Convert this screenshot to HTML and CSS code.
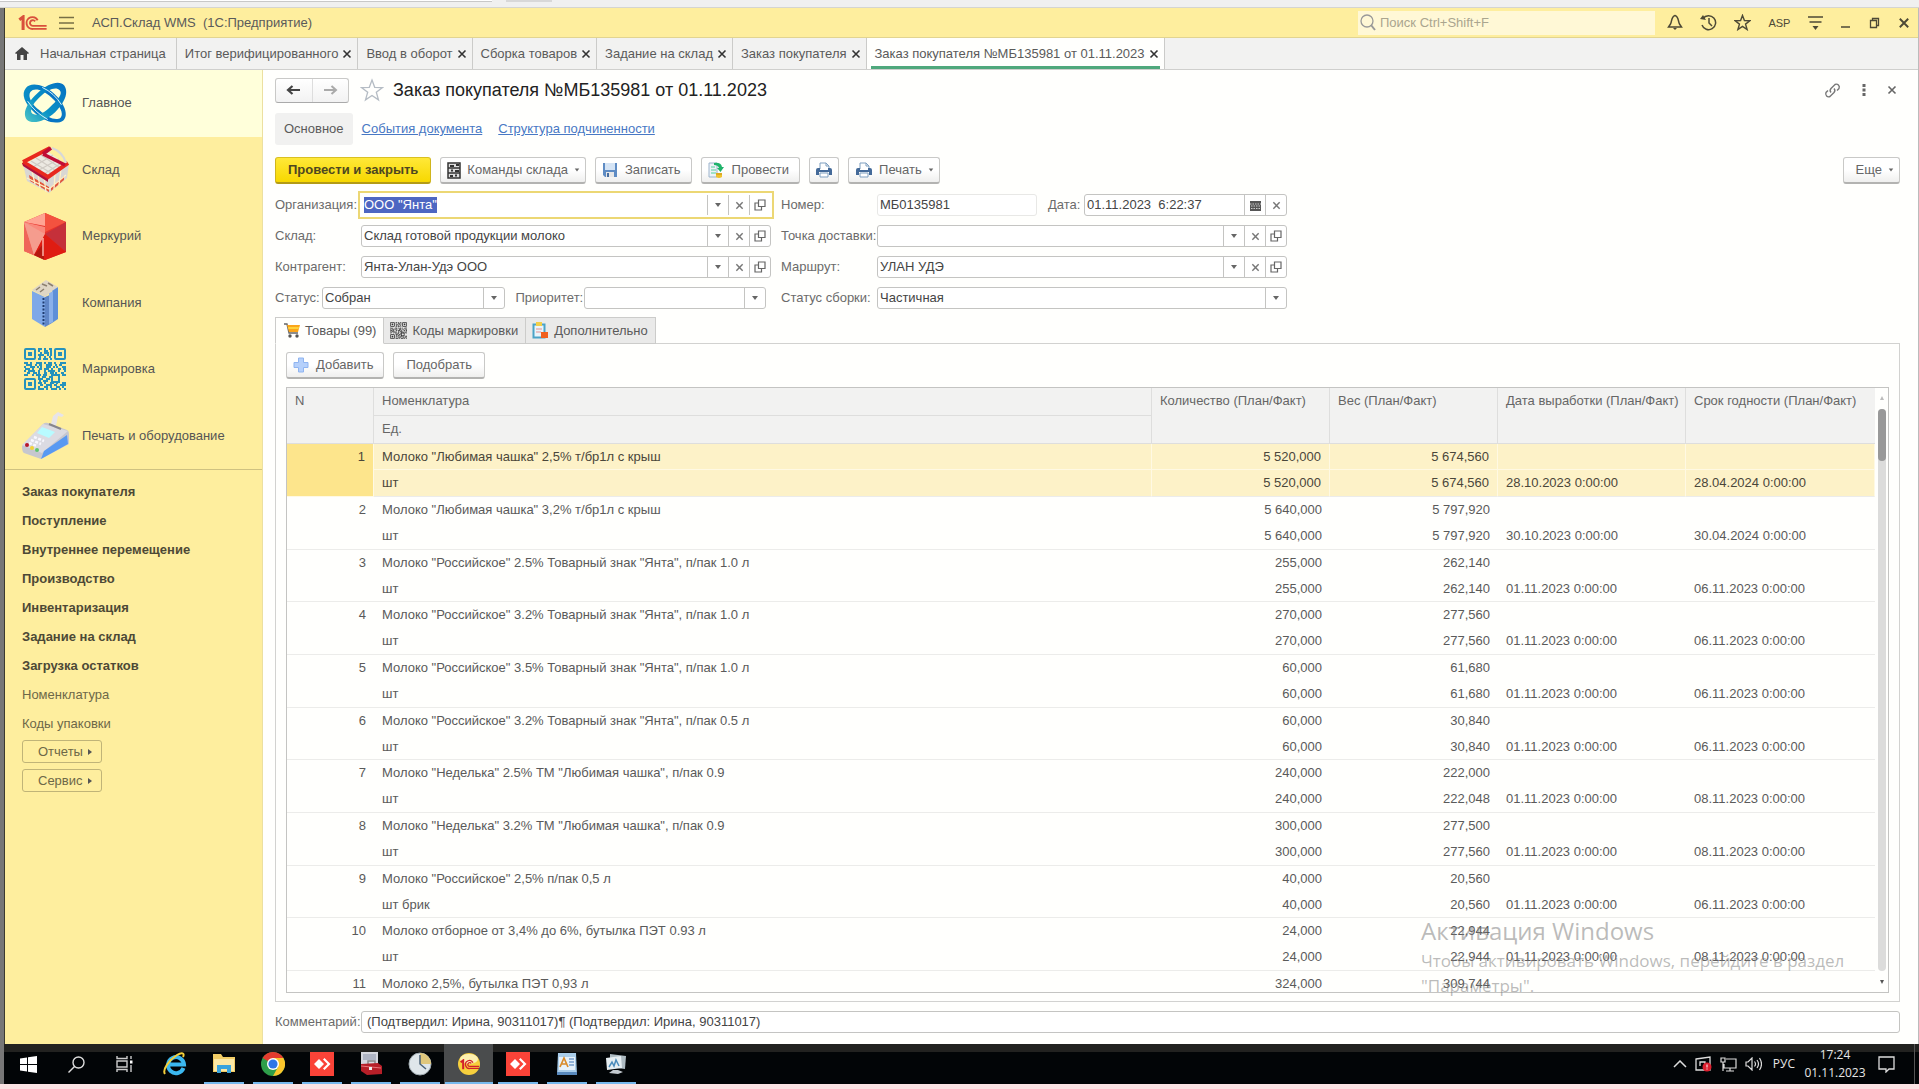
FILE: index.html
```
<!DOCTYPE html>
<html lang="ru">
<head>
  <meta charset="UTF-8">
  <title>АСП.Склад WMS (1С:Предприятие)</title>
  <link rel="stylesheet" href="styles.css">
</head>
<body>
  <!-- Общие иконки -->
  <svg class="sprite">
    <symbol id="i-x" viewBox="0 0 10 10"><path d="M1.500 1.500l7 7M8.500 1.500l-7 7" fill="none" stroke="currentColor" stroke-width="1.600"/></symbol>
    <symbol id="i-down" viewBox="0 0 8 8"><path d="M1 2h6L4 6z" fill="currentColor"/></symbol>
    <symbol id="i-open" viewBox="0 0 12 12"><path d="M4.500 1h6.500v6.500H4.500zM4.500 4H1v7h6.500V7.500" fill="none" stroke="currentColor" stroke-width="1.200"/></symbol>
    <symbol id="i-star" viewBox="0 0 24 24"><path d="M12 2l2.700 7.300 7.800.200-6.200 4.800 2.200 7.600L12 17.500l-6.500 4.400 2.200-7.600L1.500 9.500l7.800-.200z" fill="none" stroke="currentColor" stroke-width="var(--sw,1.300)"/></symbol>
    <symbol id="i-print" viewBox="0 0 18 18">
      <path d="M5 8V2h6l3 3v3" fill="#fff" stroke="#7f9fc0"/><path d="M11 2v3h3" fill="none" stroke="#7f9fc0"/>
      <path d="M1 9q0-2 2-2h2v2h8V7h2q2 0 2 2v5h-3v-3H4v3H1z" fill="#446a99"/><path d="M5 12h8v4H5z" fill="#fff" stroke="#7f9fc0"/>
    </symbol>
    <symbol id="i-any" viewBox="0 0 24 24"><path d="M0 0h24v24H0z" fill="#fa4338"/><path d="M9 7l5 5-5 5-5-5zM13 7.500l1.500-1.500 6 6-6 6-1.500-1.500 4.500-4.500z" fill="#fff"/></symbol>
    <symbol id="i-qr" viewBox="0 0 42 42">
      <g fill="none" stroke="currentColor" stroke-width="2">
        <rect x="1" y="1" width="10" height="10" rx="1"/><rect x="31" y="1" width="10" height="10" rx="1"/><rect x="1" y="31" width="10" height="10" rx="1"/>
        <path d="M14 1h14" stroke-dasharray="4 2 2 3"/><path d="M14 3h14" stroke-dasharray="2 4 4 2"/><path d="M16 5h12" stroke-dasharray="2 2 5 1"/>
        <path d="M14 7h14" stroke-dasharray="6 3 2 1"/><path d="M15 9h13" stroke-dasharray="2 3"/><path d="M14 11h14" stroke-dasharray="3 2 5 2"/>
        <path d="M0 15h42" stroke-dasharray="4 2 2 4 6 2 2 2"/><path d="M2 17h40" stroke-dasharray="6 3 2 2 3 4"/><path d="M0 19h42" stroke-dasharray="2 4 5 2 2 1"/>
        <path d="M1 21h41" stroke-dasharray="5 2 2 5 3 2"/><path d="M0 23h42" stroke-dasharray="2 2 7 3 2 4"/><path d="M3 25h39" stroke-dasharray="3 3 4 1 2 4"/>
        <path d="M0 27h42" stroke-dasharray="4 4 2 2 5 2"/><path d="M14 29h14" stroke-dasharray="2 2 4 3"/><path d="M14 31h12" stroke-dasharray="5 3"/>
        <path d="M15 33h14" stroke-dasharray="2 2 5 3"/><path d="M14 35h28" stroke-dasharray="4 2 2 4"/><path d="M16 37h26" stroke-dasharray="3 3 6 2"/>
        <path d="M14 39h28" stroke-dasharray="2 4 4 2"/><path d="M14 41h28" stroke-dasharray="6 2 2 3"/><rect x="28" y="27" width="7" height="7"/>
      </g>
      <path d="M4 4h4v4H4zM34 4h4v4h-4zM4 34h4v4H4z" fill="currentColor"/>
    </symbol>
    <symbol id="i-1c" viewBox="0 0 30 17">
      <g fill="none" stroke="currentColor"><path d="M1 5l4-3v14" stroke-width="3.200"/><path d="M20.500 5.500A6.300 6.300 0 1 0 15.500 14.800H30" stroke-width="2"/><path d="M17.800 6.800A3 3 0 1 0 15.500 11.500H30" stroke-width="2"/></g>
    </symbol>
  </svg>

  <div class="host-strip"><span class="host-field"></span><span class="host-tab"></span></div>

  <div class="desktop">
    <div class="app">
      <header class="titlebar">
        <svg class="logo"><use href="#i-1c"/></svg>
        <button class="icon-btn burger" aria-label="Меню"><svg width="15" height="14" viewBox="0 0 15 14"><path d="M0 1.500h15M0 7h15M0 12.500h15" stroke="#776f45" stroke-width="1.500"/></svg></button>
        <span class="app-name">АСП.Склад WMS&nbsp; (1С:Предприятие)</span>
        <div class="search">
          <svg width="16" height="17" viewBox="0 0 16 17"><circle cx="7" cy="7" r="6" fill="none" stroke="#999" stroke-width="1.300"/><path d="M11 11l4 5" stroke="#999" stroke-width="2"/></svg>
          <input type="text" placeholder="Поиск Ctrl+Shift+F" aria-label="Поиск">
        </div>
        <div class="win-tools">
          <button class="icon-btn" aria-label="Уведомления"><svg width="16" height="17" viewBox="0 0 16 17"><path d="M8 1.500C4 2.500 5 8 3.500 10L1.500 13h13l-2-3C11 8 12 2.500 8 1.500z" fill="none" stroke="#4d4936" stroke-width="1.500"/><path d="M6 14h4l-2 2z" fill="#4d4936"/></svg></button>
          <button class="icon-btn" aria-label="История"><svg width="17" height="17" viewBox="0 0 17 17"><path d="M3 4.500A7 7 0 1 1 2 11M9 4v5l3 3" fill="none" stroke="#4d4936" stroke-width="1.500"/><path d="M0 5l6 1-3-5z" fill="#4d4936"/></svg></button>
          <button class="icon-btn" aria-label="Избранное"><svg class="dark-star" width="17" height="17"><use href="#i-star"/></svg></button>
          <span class="user">ASP</span>
          <button class="icon-btn" aria-label="Сервис"><svg width="15" height="16" viewBox="0 0 15 16"><path d="M0 2h15M1.500 7h12" stroke="#4d4936" stroke-width="1.500"/><path d="M4.500 11h6l-3 4z" fill="#4d4936"/></svg></button>
          <button class="icon-btn" aria-label="Свернуть"><svg width="12" height="12" viewBox="0 0 12 12"><path d="M1 10h9" stroke="#4d4936" stroke-width="1.500"/></svg></button>
          <button class="icon-btn" aria-label="Развернуть"><svg width="12" height="12" viewBox="0 0 12 12"><path d="M1.500 3.500h6v7h-6zM3.500 3V1.500h6v7H8" fill="none" stroke="#4d4936" stroke-width="1.300"/></svg></button>
          <button class="icon-btn" aria-label="Закрыть"><svg width="12" height="12"><use href="#i-x"/></svg></button>
        </div>
      </header>

      <nav class="tabbar">
        <button class="tab home"><svg width="14" height="13" viewBox="0 0 14 13"><path d="M7 0l7 6-1 1-1-.600V13H8.500V8h-3v5H2V6.400L1 7 0 6z" fill="#444"/></svg>Начальная страница</button>
        <button class="tab">Итог верифицированного<svg class="x"><use href="#i-x"/></svg></button>
        <button class="tab">Ввод в оборот<svg class="x"><use href="#i-x"/></svg></button>
        <button class="tab">Сборка товаров<svg class="x"><use href="#i-x"/></svg></button>
        <button class="tab">Задание на склад<svg class="x"><use href="#i-x"/></svg></button>
        <button class="tab">Заказ покупателя<svg class="x"><use href="#i-x"/></svg></button>
        <button class="tab active">Заказ покупателя №МБ135981 от 01.11.2023<svg class="x"><use href="#i-x"/></svg></button>
      </nav>

      <div class="workspace">
        <aside class="sidebar">
          <nav class="sections">
            <a href="#" class="section active">
              <svg viewBox="0 0 48 48">
                <defs>
                  <linearGradient id="g1" x1="0" y1="0" x2="1" y2="0"><stop offset="0" stop-color="#0a8fc6"/><stop offset=".6" stop-color="#0672c4"/><stop offset="1" stop-color="#0879c4"/></linearGradient>
                  <linearGradient id="g2" x1="0" y1="1" x2="1" y2="0"><stop offset="0" stop-color="#4fc6c6"/><stop offset=".4" stop-color="#0a93c6"/><stop offset="1" stop-color="#0470c2"/></linearGradient>
                </defs>
                <g fill-rule="evenodd">
                  <path d="M3 8C8 1 22 3 34 14c12 11 16 24 10 29-7 5-20 2-31-8C1 24-2 14 3 8zm5 4c-3 5 1 13 10 20 9 8 18 12 23 8 4-4-1-14-10-22C21 9 12 7 8 12z" fill="url(#g1)"/>
                  <path d="M45 5C40-1 28 2 16 13 4 24-1 35 4 42c6 6 20 2 31-8C46 23 50 12 45 5zm-5 5c-4-4-13-1-21 7C10 25 6 34 11 36c5 3 14-2 21-10 8-7 11-13 8-16z" fill="url(#g2)"/>
                </g>
                <path d="M21 7q13 6 21 19M5 22q8 12 22 20" fill="none" stroke="#e9fbff"/>
              </svg>Главное</a>
            <a href="#" class="section">
              <svg viewBox="0 0 48 48">
                <path d="M2 18l4 17 22 12 18-15 2-15-19 15z" fill="#d9d7d3"/>
                <path d="M8 29l20 12v5L9 35zM30 41l13-11v4L30 45z" fill="#e2573b"/>
                <path d="M11 25l3 13M17 28l2 14M23 31l2 15M34 28l-1 15M40 23l-2 16M6 32l22 11 17-14" stroke="#fdf1c8" stroke-width="1.300" fill="none"/>
                <path d="M6 17L26 5l18 13-17 13z" fill="#ece9e2"/>
                <path d="M10 15l20 12M15 12l19 12M20 9l18 12M12 21L32 9M18 24L38 13M23 28l19-12" stroke="#cfcac3" stroke-width="1.200"/>
                <path d="M2 16L27 31 47 17M2 16L29 2" fill="none" stroke="#e8281e" stroke-width="4"/>
                <path d="M1 17l26 16v3L2 20z" fill="#b0103a"/><path d="M22 8l22 11M22 8l8-6" stroke="#c00c35" stroke-width="3.500"/>
                <path d="M31 2q11 4 14 15" stroke="#d8d8d8" stroke-width="2" fill="none"/>
              </svg>Склад</a>
            <a href="#" class="section">
              <svg viewBox="0 0 48 48">
                <path d="M3 10L24 1l21 9v30l-21 8-21-9z" fill="#e8322a"/><path d="M3 10L24 1v13z" fill="#ffa493"/><path d="M24 1l21 9-21 10z" fill="#f3523f"/>
                <path d="M3 10l21 5v7L13 43 3 39z" fill="#f9897c"/><path d="M3 10l10 33-10-4z" fill="#ef6659"/><path d="M3 10l10 33 11-21z" fill="#f59c8e"/>
                <path d="M45 10v30L24 22z" fill="#c5303a"/><path d="M24 22l21 18-21 8-11-5z" fill="#df1c12"/><path d="M13 43l10-12v17z" fill="#8c120c" opacity=".5"/><path d="M22 26v18" stroke="#ffb1a6" stroke-width="1.500"/>
              </svg>Меркурий</a>
            <a href="#" class="section">
              <svg viewBox="0 0 48 48">
                <path d="M11 12l13 6v30l-13-8z" fill="#7ea8e8"/><path d="M24 18l7-3v29l-7 4z" fill="#5f86c8"/><path d="M31 10l6-2v32l-6 4z" fill="#5e8fd8"/><path d="M28 14l4-2v31l-4 2z" fill="#8ab0ea"/>
                <path d="M11 11L25 1l12 7-6 4-7 6z" fill="#dfd6c5"/><path d="M15 11l4-3M19 13l4-3M21 5l5 2M27 4l5 3" stroke="#8b7f6e" stroke-width="1.500"/><path d="M22.500 19v28" stroke="#1e3b70" stroke-width="2" stroke-dasharray="2 1.500"/>
              </svg>Компания</a>
            <a href="#" class="section qr"><svg><use href="#i-qr"/></svg>Маркировка</a>
            <a href="#" class="section">
              <svg viewBox="0 0 48 48">
                <path d="M30 12l2-8 5-4 6 3-2 2-4-1-2 10z" fill="#e7e4e8"/><path d="M1 34L22 12q2-2 5-1l19 7q2 1 2 4v10L20 47 3 41q-2-1-2-7z" fill="#c6c7cf"/>
                <path d="M1 33L22 12l25 7-26 22z" fill="#dbdbe2"/><path d="M20 47l3-8 23-16 1 9z" fill="#5899f2"/><path d="M16 21l5-6 13 5-6 6z" fill="#b8fbff"/><path d="M28 12l12 5" stroke="#87858e" stroke-width="2"/>
                <path d="M13 25l10 4M10 28l10 4M8 31l8 3" stroke="#f8f8ff" stroke-width="2.500" stroke-dasharray="3 1.500"/>
                <circle cx="6" cy="33" r="2" fill="#b6172c"/><circle cx="11" cy="36" r="2" fill="#f2d338"/><circle cx="16" cy="38" r="2" fill="#5fc36e"/>
              </svg>Печать и оборудование</a>
          </nav>
          <nav class="commands">
            <a href="#" class="strong">Заказ покупателя</a>
            <a href="#" class="strong">Поступление</a>
            <a href="#" class="strong">Внутреннее перемещение</a>
            <a href="#" class="strong">Производство</a>
            <a href="#" class="strong">Инвентаризация</a>
            <a href="#" class="strong">Задание на склад</a>
            <a href="#" class="strong">Загрузка остатков</a>
            <a href="#">Номенклатура</a>
            <a href="#">Коды упаковки</a>
            <button>Отчеты<i class="tri"></i></button>
            <button>Сервис<i class="tri"></i></button>
          </nav>
        </aside>

        <main class="doc">
          <div class="doc-head">
            <div class="nav-pair">
              <button aria-label="Назад"><svg width="15" height="12" viewBox="0 0 15 12"><path d="M14 6H3M6.500 2L2 6l4.500 4" fill="none" stroke="#444" stroke-width="2.200"/></svg></button>
              <button aria-label="Вперед"><svg width="15" height="12" viewBox="0 0 15 12"><path d="M1 6h11M8.500 2L13 6l-4.500 4" fill="none" stroke="#aaa" stroke-width="2"/></svg></button>
            </div>
            <svg class="fav"><use href="#i-star"/></svg>
            <h1>Заказ покупателя №МБ135981 от 01.11.2023</h1>
            <div class="doc-tools">
              <button class="icon-btn" aria-label="Ссылка"><svg width="17" height="17" viewBox="0 0 17 17"><path d="M7 10.500a3 3 0 0 1 0-4l4-4a3 3 0 0 1 4 4l-2 2M10 6.500a3 3 0 0 1 0 4l-4 4a3 3 0 0 1-4-4l2-2" fill="none" stroke="#777" stroke-width="1.400"/></svg></button>
              <button class="icon-btn" aria-label="Еще"><svg width="4" height="14" viewBox="0 0 4 14"><path d="M.500 1h3v3h-3zM.500 5.500h3v3h-3zM.500 10h3v3h-3z" fill="#666"/></svg></button>
              <button class="icon-btn" aria-label="Закрыть"><svg width="10" height="10"><use href="#i-x"/></svg></button>
            </div>
          </div>

          <nav class="subnav">
            <span class="current">Основное</span>
            <a href="#">События документа</a>
            <a href="#">Структура подчиненности</a>
          </nav>

          <div class="toolbar">
            <button class="btn primary">Провести и закрыть</button>
            <button class="btn"><svg width="14" height="17" viewBox="0 0 14 17"><path d="M1 1h12v15H1z" fill="#ddd" stroke="#333" stroke-width="1.500"/><path d="M1 6h12M1 11h12" stroke="#333" stroke-width="1.500"/><path d="M3 4h4M9 3h3M4 8.500h2M8 9h4M3 14h3M8 13.500h2" stroke="#333" stroke-width="2"/></svg>Команды склада<svg class="arr"><use href="#i-down"/></svg></button>
            <button class="btn"><svg width="16" height="16" viewBox="0 0 16 16"><path d="M1 1h14v14H3l-2-2z" fill="#5f8cc4"/><path d="M3 1h10v7H3z" fill="#d5e4f5"/><path d="M4 10h8v5H4z" fill="#e8e8e8"/><path d="M5 11h2v4H5z" fill="#4a6f9f"/></svg>Записать</button>
            <button class="btn"><svg width="17" height="17" viewBox="0 0 17 17"><path d="M1 1h8v14H1z" fill="#eef3f8" stroke="#9db4cc"/><path d="M3 5h4M3 8h5M3 11h5" stroke="#8db" stroke-width="1.500"/><path d="M6 1q7-1 8 4h2l-3.500 5L9 6h2Q10 3 6 3z" fill="#1fb36b"/><path d="M8 11h6v4q-3 2-6 0z" fill="#f0c22e"/><path d="M8 12h6" stroke="#c8931a"/></svg>Провести</button>
            <button class="btn only-icon" aria-label="Печать документа"><svg width="18" height="18"><use href="#i-print"/></svg></button>
            <button class="btn"><svg width="18" height="18"><use href="#i-print"/></svg>Печать<svg class="arr"><use href="#i-down"/></svg></button>
            <button class="btn more">Еще<svg class="arr"><use href="#i-down"/></svg></button>
          </div>

          <form class="fields">
            <div class="line">
              <label class="w86" for="org">Организация:</label>
              <div class="box focused"><input id="org" value='ООО "Янта"'><button type="button" aria-label="Выбрать"><svg class="arr"><use href="#i-down"/></svg></button><button type="button" aria-label="Очистить"><svg class="x"><use href="#i-x"/></svg></button><button type="button" aria-label="Открыть"><svg class="open"><use href="#i-open"/></svg></button></div>
            </div>
            <div class="line">
              <label class="w96" for="num">Номер:</label>
              <div class="box plain"><input id="num" value="МБ0135981" readonly></div>
              <label class="date-label" for="date">Дата:</label>
              <div class="box"><input id="date" value="01.11.2023&nbsp; 6:22:37"><button type="button" aria-label="Календарь"><svg width="11" height="11" viewBox="0 0 11 11"><path d="M0 1h11v10H0z" fill="#555"/><path d="M0 4h11M1 6h9M1 8.500h9" stroke="#ccc" stroke-dasharray="1.500 1"/></svg></button><button type="button" aria-label="Очистить"><svg class="x"><use href="#i-x"/></svg></button></div>
            </div>
            <div class="line">
              <label class="w86" for="store">Склад:</label>
              <div class="box"><input id="store" value="Склад готовой продукции молоко"><button type="button" aria-label="Выбрать"><svg class="arr"><use href="#i-down"/></svg></button><button type="button" aria-label="Очистить"><svg class="x"><use href="#i-x"/></svg></button><button type="button" aria-label="Открыть"><svg class="open"><use href="#i-open"/></svg></button></div>
            </div>
            <div class="line">
              <label class="w96" for="point">Точка доставки:</label>
              <div class="box"><input id="point"><button type="button" aria-label="Выбрать"><svg class="arr"><use href="#i-down"/></svg></button><button type="button" aria-label="Очистить"><svg class="x"><use href="#i-x"/></svg></button><button type="button" aria-label="Открыть"><svg class="open"><use href="#i-open"/></svg></button></div>
            </div>
            <div class="line">
              <label class="w86" for="partner">Контрагент:</label>
              <div class="box"><input id="partner" value="Янта-Улан-Удэ ООО"><button type="button" aria-label="Выбрать"><svg class="arr"><use href="#i-down"/></svg></button><button type="button" aria-label="Очистить"><svg class="x"><use href="#i-x"/></svg></button><button type="button" aria-label="Открыть"><svg class="open"><use href="#i-open"/></svg></button></div>
            </div>
            <div class="line">
              <label class="w96" for="route">Маршрут:</label>
              <div class="box"><input id="route" value="УЛАН УДЭ"><button type="button" aria-label="Выбрать"><svg class="arr"><use href="#i-down"/></svg></button><button type="button" aria-label="Очистить"><svg class="x"><use href="#i-x"/></svg></button><button type="button" aria-label="Открыть"><svg class="open"><use href="#i-open"/></svg></button></div>
            </div>
            <div class="line statuses">
              <label for="status">Статус:</label>
              <div class="box"><select id="status"><option>Собран</option></select><span class="drop"><svg class="arr"><use href="#i-down"/></svg></span></div>
              <label class="prio" for="prio">Приоритет:</label>
              <div class="box"><select id="prio"><option></option></select><span class="drop"><svg class="arr"><use href="#i-down"/></svg></span></div>
            </div>
            <div class="line">
              <label class="w96" for="build">Статус сборки:</label>
              <div class="box"><select id="build"><option>Частичная</option></select><span class="drop"><svg class="arr"><use href="#i-down"/></svg></span></div>
            </div>
          </form>

          <div class="pages">
            <button class="page active"><svg width="16" height="16" viewBox="0 0 16 16"><path d="M0 1h3l2 9h9" fill="none" stroke="#666" stroke-width="1.300"/><path d="M3 2h13l-2 7H5z" fill="#fba51a"/><path d="M4 4h11l-.500 2H4.500z" fill="#ffd23a"/><circle cx="6" cy="13" r="1.700" fill="#555"/><circle cx="13" cy="13" r="1.700" fill="#555"/></svg>Товары (99)</button>
            <button class="page"><svg class="qr-small"><use href="#i-qr"/></svg>Коды маркировки</button>
            <button class="page"><svg width="17" height="17" viewBox="0 0 17 17"><path d="M1.500 2.500h11v13h-11z" fill="#e9f4fa" stroke="#4ba3c7" stroke-width="2"/><path d="M4 0h6v4H4z" fill="#f2cf4a"/><path d="M4 7h6M4 10h5" stroke="#e58f8f"/><path d="M9 10h7v6H9z" fill="#f0611f"/></svg>Дополнительно</button>
          </div>

          <section class="panel">
            <div class="toolbar small">
              <button class="btn add"><svg width="16" height="16" viewBox="0 0 16 16"><path d="M5.500 1h5v4.500H15v5h-4.500V15h-5v-4.500H1v-5h4.500z" fill="#b5d0fb" stroke="#8fb4f0" stroke-linejoin="round"/></svg>Добавить</button>
              <button class="btn pick">Подобрать</button>
            </div>
            <div class="grid">
              <div class="grid-view">
                <table id="goods">
                  <colgroup><col class="c-n"><col><col class="c-qty"><col class="c-weight"><col class="c-made"><col class="c-exp"></colgroup>
                  <thead>
                    <tr><th rowspan="2">N</th><th>Номенклатура</th><th rowspan="2">Количество (План/Факт)</th><th rowspan="2">Вес (План/Факт)</th><th rowspan="2">Дата выработки (План/Факт)</th><th rowspan="2">Срок годности (План/Факт)</th></tr>
                    <tr><th>Ед.</th></tr>
                  </thead>
                </table>
              </div>
              <div class="scroll"><i class="up"></i><div class="track"><div class="thumb"></div></div><i class="dn"></i></div>
            </div>
          </section>

          <div class="line comment">
            <label class="w86" for="comment">Комментарий:</label>
            <div class="box"><input id="comment" value="(Подтвердил: Ирина, 90311017)¶ (Подтвердил: Ирина, 90311017)"></div>
          </div>
        </main>
      </div>
    </div>

    <footer class="taskbar">
      <button class="task sys" aria-label="Пуск"><svg width="17" height="17" viewBox="0 0 17 17"><path d="M0 2.500l7-1V8H0zM8 1.300L17 0v8H8zM0 9h7v6.500l-7-1zM8 9h9v8l-9-1.300z" fill="#fff"/></svg></button>
      <button class="task sys" aria-label="Поиск"><svg width="17" height="17" viewBox="0 0 17 17"><circle cx="10.500" cy="6.500" r="5.500" fill="none" stroke="#ddd" stroke-width="1.400"/><path d="M6.500 10.500L.500 16.500" stroke="#ddd" stroke-width="1.400"/></svg></button>
      <button class="task sys" aria-label="Представление задач"><svg width="17" height="16" viewBox="0 0 17 16"><path d="M1 0v2.500h10V0M1 16v-2.500h10V16M1 5h10v6H1zM15 0v3M15 9v7" fill="none" stroke="#ccc" stroke-width="1.400"/><path d="M14 4.500h2.500v3H14z" fill="#fff"/></svg></button>
      <button class="task ie" aria-label="Internet Explorer"><svg width="24" height="24" viewBox="0 0 24 24"><path d="M20.500 16A8 8 0 1 1 21 12.500H7" fill="none" stroke="#3bb8f0" stroke-width="4"/><path d="M2 22C-1 18 6 8 14 3c5-3 8-2 6 2" fill="none" stroke="#f4cf3a" stroke-width="2"/></svg></button>
      <button class="task run" aria-label="Проводник"><svg width="22" height="22" viewBox="0 0 22 22"><path d="M0 3V1h8l2 3h12v15H0z" fill="#f2cd66"/><path d="M1 6h20v12H1z" fill="#fde9a5"/><path d="M4 12h14v8h-4v-4H8v4H4z" fill="#3aa4dd"/></svg></button>
      <button class="task run" aria-label="Chrome"><svg width="24" height="24" viewBox="0 0 24 24"><circle cx="12" cy="12" r="12" fill="#2e9e4a"/><path d="M12 12L1.600 6A12 12 0 0 1 22.400 6z" fill="#e33b2e"/><path d="M12 6h10.400A12 12 0 0 1 12 24l5-9z" fill="#fbc62c"/><circle cx="12" cy="12" r="6" fill="#fff"/><circle cx="12" cy="12" r="4.600" fill="#2f76e6"/></svg></button>
      <button class="task run" aria-label="AnyDesk"><svg width="24" height="24"><use href="#i-any"/></svg></button>
      <button class="task run" aria-label="Инструменты"><svg width="22" height="24" viewBox="0 0 22 24"><path d="M1 0h17v13H1z" fill="#d5d7df"/><path d="M3 2h13v6H3z" fill="#aeb4c4"/><path d="M8 12V9h7v3" fill="none" stroke="#888" stroke-width="1.500"/><path d="M1 12l17-1 4 3v8l-15 1-6-4z" fill="#b71f28"/><path d="M1 14l20 2" stroke="#e9747b"/><path d="M9 15h3v3H9z" fill="#eee"/></svg></button>
      <button class="task run" aria-label="Часы"><svg width="24" height="24" viewBox="0 0 24 24"><circle cx="12" cy="12" r="11" fill="#dfe6ea" stroke="#9faab0"/><path d="M12 12V1a11 11 0 0 1 11 11z" fill="#e0c77c"/><path d="M12 3v9l6 5" fill="none" stroke="#4b6176" stroke-width="1.500"/></svg></button>
      <button class="task run current" aria-label="1С:Предприятие"><svg width="24" height="24" viewBox="0 0 24 24"><circle cx="12" cy="12" r="11" fill="#f6cf3d"/><ellipse cx="12" cy="7" rx="9" ry="5" fill="#fdf0b0"/><svg x="3" y="7" width="19" height="11" color="#d2202a"><use href="#i-1c"/></svg></svg></button>
      <button class="task run" aria-label="AnyDesk"><svg width="24" height="24"><use href="#i-any"/></svg></button>
      <button class="task run" aria-label="WordPad"><svg width="22" height="24" viewBox="0 0 22 24"><path d="M2 1h18l1 22H1z" fill="#a9cdea"/><path d="M3 5h16v13H3z" fill="#e7f2fb"/><path d="M4 15L8 6l4 9M6 12h4" fill="none" stroke="#d98b2b" stroke-width="1.700"/><path d="M13 7h5M13 10h5M13 13h5" stroke="#3f74b5"/><path d="M1 20h20v3H1z" fill="#5889bd"/></svg></button>
      <button class="task run" aria-label="Монитор"><svg width="24" height="22" viewBox="0 0 24 22"><path d="M6 1l16 2-1 13-15-2z" fill="#aebbc2"/><path d="M2 5l15-2 1 12-15 2z" fill="#e6eef2"/><path d="M5 14l3-5 2 4 2-6 3 6" fill="none" stroke="#4b8bbb" stroke-width="1.500"/><path d="M5 20l4-3h5l5 2-5 2z" fill="#c3c9cf"/></svg></button>
      <div class="tray">
        <svg width="14" height="8" viewBox="0 0 14 8"><path d="M1 7l6-6 6 6" fill="none" stroke="#ddd" stroke-width="1.500"/></svg>
        <svg width="17" height="16" viewBox="0 0 17 16"><path d="M1 3l14-2v13H1zM5 10V6h5v4" fill="none" stroke="#ddd" stroke-width="1.300"/><circle cx="12" cy="11" r="4.500" fill="#dc1f2e"/><path d="M12 8.500v3M12 12.500v1" stroke="#fff"/></svg>
        <svg width="17" height="15" viewBox="0 0 17 15"><path d="M6 2h10v9H4V7M6 14h8M10 11v3M1 1h4v4H1zM3 5v9" fill="none" stroke="#ddd" stroke-width="1.200"/></svg>
        <svg width="17" height="14" viewBox="0 0 17 14"><path d="M1 5h2l4-4v12L3 9H1zM9.500 4.500q2 2.500 0 5M12 3q3 4 0 8M14.500 1q4 6 0 12" fill="none" stroke="#ddd" stroke-width="1.200"/></svg>
        <span class="lang">РУС</span>
        <span class="clock">17:24<br>01.11.2023</span>
        <svg class="note" width="17" height="17" viewBox="0 0 17 17"><path d="M1 1h15v12h-5l-3 3v-3H1z" fill="none" stroke="#ddd" stroke-width="1.300"/></svg>
        <span class="peek"></span>
      </div>
    </footer>

    <div class="watermark"><strong>Активация Windows</strong>Чтобы активировать Windows, перейдите в раздел "Параметры".</div>
  </div>
  <div class="host-bottom"></div>

  <script src="script.js"></script>
</body>
</html>
```

FILE: styles.css
```
* {
  box-sizing: border-box;
}
body {
  margin: 0;
  height: 100vh;
  display: flex;
  flex-direction: column;
  overflow: hidden;
  background: #fffffd;
  color: #5a5a5a;
  font-family: "Liberation Sans", Arial, sans-serif;
  font-size: 13px;
  line-height: 16px;
}
button, input, select {
  font: inherit;
  color: inherit;
  margin: 0;
}
button {
  cursor: pointer;
}
svg {
  flex: none;
}
.sprite {
  position: absolute;
  width: 0;
  height: 0;
}
.icon-btn {
  display: flex;
  align-items: center;
  justify-content: center;
  padding: 0;
  border: 0;
  background: none;
}
.x {
  width: 10px;
  height: 10px;
}
.arr {
  width: 8px;
  height: 8px;
}
.open {
  width: 12px;
  height: 12px;
}

/* Рамка удалённого рабочего стола */
.host-strip {
  height: 8px;
  flex: none;
  display: flex;
  background: #f0f0f0;
  border-bottom: 1px solid #d5d5d0;
}
.host-field {
  width: 492px;
  height: 2px;
  background: #fff;
  border-bottom: 1px solid #c8c8c8;
}
.host-tab {
  width: 46px;
  height: 2px;
  margin-left: 14px;
  background: #d8d8d8;
}
.host-bottom {
  height: 5px;
  flex: none;
  background: #fbe3e4;
}
.desktop {
  position: relative;
  flex: 1;
  min-height: 0;
  display: flex;
  flex-direction: column;
  border-left: 4px solid #777;
}
.app {
  flex: 1;
  min-height: 0;
  display: flex;
  flex-direction: column;
  border-left: 1px solid #3c3a30;
  border-right: 1px solid #bbb;
}

/* Заголовок программы */
.titlebar {
  height: 30px;
  flex: none;
  display: flex;
  align-items: center;
  padding: 0 8px 0 13px;
  background: #feee9e;
  border-bottom: 1px solid #e2d491;
}
.logo {
  width: 29px;
  height: 16px;
  color: #d9503c;
}
.burger {
  margin: 0 18px 0 12px;
}
.app-name {
  flex: 1;
}
.search {
  width: 297px;
  height: 24px;
  display: flex;
  align-items: center;
  gap: 4px;
  padding-left: 2px;
  background: #fff8d6;
}
.search input {
  flex: 1;
  min-width: 0;
  padding: 0;
  border: 0;
  background: none;
  outline: none;
}
.search input::placeholder {
  color: #aaa58f;
}
.win-tools {
  display: flex;
  align-items: center;
  justify-content: space-between;
  width: 255px;
  padding-left: 12px;
  color: #4d4936;
}
.dark-star {
  --sw: 2;
}
.user {
  font-size: 11px;
}

/* Открытые окна */
.tabbar {
  height: 32px;
  flex: none;
  display: flex;
  background: #f2f2f1;
  border-bottom: 1px solid #cfcfcd;
}
.tab {
  display: flex;
  align-items: center;
  gap: 4px;
  padding: 0 5px 0 8px;
  border: 0;
  border-right: 1px solid #cbcbc9;
  background: none;
  white-space: nowrap;
}
.tab.home {
  gap: 11px;
  padding: 0 10px;
}
.tab .x {
  color: #333;
}
.tab.active {
  background: #fffffd;
  box-shadow: inset 4px 0 #fffffd, inset -4px 0 #fffffd, inset 0 -3px #4fa87c;
}

/* Панель разделов */
.workspace {
  flex: 1;
  min-height: 0;
  display: flex;
}
.sidebar {
  width: 258px;
  flex: none;
  background: #feee9e;
  border-right: 1px solid #ece0a0;
}
.sections {
  height: 400px;
  display: flex;
  flex-direction: column;
  border-bottom: 1px solid #cfc281;
}
.section {
  flex: 1;
  display: flex;
  align-items: center;
  gap: 13px;
  padding-left: 16px;
  color: #555;
  text-decoration: none;
}
.section svg {
  width: 48px;
  height: 48px;
}
.section.active {
  background: #ffffda;
}
.section.active svg {
  height: 44px;
}
.section.qr svg {
  padding: 3px;
  color: #2592bd;
}
.commands {
  display: flex;
  flex-direction: column;
  align-items: flex-start;
  padding: 7px 17px;
}
.commands a {
  line-height: 29px;
  color: #6d6848;
  text-decoration: none;
}
.commands .strong {
  font-weight: bold;
  color: #4d4936;
}
.commands button {
  display: flex;
  align-items: center;
  gap: 5px;
  width: 80px;
  height: 23px;
  margin-top: 2px;
  padding: 0 0 0 15px;
  border: 1px solid #c0b478;
  border-radius: 3px;
  background: none;
  color: #6d6848;
}
.commands button + button {
  margin-top: 6px;
}
.tri {
  border: 3px solid transparent;
  border-left: 4px solid #555;
  border-right: 0;
}

/* Документ */
.doc {
  flex: 1;
  min-width: 0;
  display: flex;
  flex-direction: column;
  padding: 8px 18px 11px 12px;
}
.doc-head {
  display: flex;
  align-items: center;
  height: 24px;
}
.nav-pair {
  display: flex;
  width: 74px;
  height: 25px;
  border: 1px solid #c9c9c7;
  border-bottom-color: #aaa;
  border-radius: 3px;
  background: linear-gradient(#fff, #f2f2f2);
}
.nav-pair button {
  flex: 1;
  display: flex;
  align-items: center;
  justify-content: center;
  padding: 0;
  border: 0;
  background: none;
}
.nav-pair button + button {
  border-left: 1px solid #ddd;
}
.fav {
  width: 24px;
  height: 24px;
  margin: 0 9px 0 11px;
  color: #b5bcc4;
}
h1 {
  flex: 1;
  margin: 0;
  font-size: 18px;
  font-weight: normal;
  line-height: 24px;
  color: #222;
}
.doc-tools {
  display: flex;
  align-items: center;
  gap: 21px;
  padding-right: 3px;
  color: #666;
}
.subnav {
  display: flex;
  align-items: center;
  height: 32px;
  margin-top: 11px;
}
.subnav .current {
  padding: 8px 9px;
  margin-right: 9px;
  border-radius: 3px;
  background: #f1f1f0;
}
.subnav a {
  margin-right: 16px;
  color: #4878c4;
  text-decoration: underline;
}
.toolbar {
  display: flex;
  gap: 9px;
  margin-top: 12px;
}
.btn {
  display: flex;
  align-items: center;
  justify-content: center;
  gap: 7px;
  height: 27px;
  padding: 0 10px 0 6px;
  border: 1px solid #c9c9c7;
  border-bottom: 2px solid #b3b3b1;
  border-radius: 3px;
  background: linear-gradient(#fff 50%, #efefee);
  color: #666;
  white-space: nowrap;
}
.btn .arr {
  width: 6px;
  height: 6px;
}
.btn:has(.arr) {
  gap: 6px;
  padding-right: 5px;
}
.btn.primary {
  padding: 0 12px;
  border-color: #d9c021 #d0b51c #b39b16;
  background: linear-gradient(#ffe838, #f7d800);
  color: #4d4720;
  font-weight: bold;
}
.btn.only-icon {
  width: 30px;
  padding: 0;
}
.btn.more {
  margin-left: auto;
  padding-left: 12px;
}

/* Поля шапки */
.fields {
  display: grid;
  grid-template-columns: minmax(0, 496px) minmax(0, 506px);
  gap: 9px 10px;
  margin-top: 10px;
}
.line {
  display: flex;
  align-items: center;
  min-width: 0;
}
.line label {
  flex: none;
  color: #6b6b6b;
  white-space: nowrap;
}
.line .w86 {
  width: 86px;
}
.line .w96 {
  width: 96px;
}
.line .date-label {
  width: 36px;
  margin-left: 11px;
}
.line .prio {
  width: 68px;
  margin-left: 11px;
}
.statuses {
  padding-right: 5px;
}
.statuses label:first-child {
  width: 47px;
}
.box {
  flex: 1;
  min-width: 0;
  display: flex;
  height: 22px;
  border: 1px solid #c4c4c2;
  border-radius: 3px;
  background: #fff;
}
.box input, .box select {
  flex: 1;
  min-width: 0;
  width: 0;
  padding: 0 2px;
  border: 0;
  outline: none;
  background: none;
  appearance: none;
  color: #444;
}
.box button, .drop {
  flex: none;
  width: 21px;
  display: flex;
  align-items: center;
  justify-content: center;
  padding: 0;
  border: 0;
  border-left: 1px solid #c4c4c2;
  background: none;
  color: #666;
}
.box .x {
  width: 9px;
  height: 9px;
  color: #777;
}
.box.plain {
  flex: 0 0 160px;
  border-color: #e8e8e6;
}
.box.focused {
  border-color: transparent;
  border-radius: 0;
  outline: 2px solid #ecd774;
  outline-offset: 1px;
}
.box input::selection {
  background: #4d66c2;
  color: #fff;
}

/* Закладки */
.pages {
  display: flex;
  height: 27px;
  margin-top: 8px;
  position: relative;
  margin-bottom: -1px;
}
.page {
  display: flex;
  align-items: center;
  gap: 5px;
  padding: 0 7px 0 6px;
  border: 1px solid #ccccca;
  border-left: 0;
  background: #eaeae9;
}
.page.active {
  padding-left: 8px;
  border-left: 1px solid #ccccca;
  border-bottom-color: #fffffd;
  background: #fffffd;
}
.qr-small {
  width: 17px;
  height: 17px;
  color: #333;
}
.panel {
  flex: 1;
  min-height: 0;
  display: flex;
  flex-direction: column;
  padding: 8px 10px;
  border: 1px solid #d2d2d0;
}
.toolbar.small {
  margin: 0 0 8px;
}
.btn.pick {
  padding: 0 12px;
}

/* Табличная часть */
.grid {
  flex: 1;
  min-height: 0;
  display: flex;
  border: 1px solid #c4c4c2;
}
.grid-view {
  flex: 1;
  min-width: 0;
  overflow: hidden;
}
table {
  width: 100%;
  table-layout: fixed;
  border-collapse: separate;
  border-spacing: 0;
}
.c-n {
  width: 87px;
}
.c-qty {
  width: 178px;
}
.c-weight {
  width: 168px;
}
.c-made {
  width: 188px;
}
.c-exp {
  width: 189px;
}
th {
  height: 28px;
  padding: 5px 8px;
  border-right: 1px solid #dededd;
  border-bottom: 1px solid #dededd;
  background: #f2f2f1;
  color: #666;
  font-weight: normal;
  text-align: left;
  vertical-align: top;
  white-space: nowrap;
}
th:last-child[rowspan] {
  border-right: 0;
}
td {
  height: 26px;
  padding: 0 8px;
  white-space: nowrap;
}
tbody tr:last-child td, tbody .n {
  height: 27px;
  border-bottom: 1px solid #ececea;
}
tbody:nth-of-type(3n) tr:last-child td {
  height: 26px;
}
.n, .num {
  text-align: right;
}
.n {
  vertical-align: top;
  padding-top: 5px;
}
.selected td {
  background: #fdf2c8;
  border-right: 1px solid #fff9e3;
  color: #4a463a;
}
.selected tr:first-child td {
  border-bottom: 1px solid #fff9e3;
}
.selected .n {
  background: #fde58c;
}
.scroll {
  width: 13px;
  flex: none;
  display: flex;
  flex-direction: column;
  align-items: center;
  justify-content: space-between;
  padding: 8px 0;
}
.track {
  flex: 1;
  width: 8px;
  margin: 9px 0;
  border-radius: 4px;
  background: #dcdcdb;
}
.thumb {
  height: 52px;
  border-radius: 4px;
  background: #999;
}
.up, .dn {
  border: 2px solid transparent;
}
.up {
  border-top: 0;
  border-bottom: 4px solid #bbb;
}
.dn {
  border-bottom: 0;
  border-top: 4px solid #555;
}
.comment {
  margin-top: 9px;
}
.comment input {
  padding: 0 5px;
}

/* Водяной знак поверх окна */
.watermark {
  position: absolute;
  right: 65px;
  bottom: 86px;
  width: 433px;
  color: rgba(120, 120, 120, 0.5);
  font-family: "Open Sans", "Noto Sans", sans-serif;
  font-size: 17px;
  line-height: 25px;
  pointer-events: none;
}
.watermark strong {
  display: block;
  font-size: 24px;
  font-weight: normal;
  line-height: 34px;
}

/* Панель задач */
.taskbar {
  height: 40px;
  flex: none;
  display: flex;
  background: linear-gradient(#222220 8px, #020507 8px);
}
.task {
  width: 49px;
  display: flex;
  align-items: center;
  justify-content: center;
  padding: 0;
  border: 0;
  background: none;
}
.task.sys {
  width: 48px;
}
.task.ie {
  margin-left: 2px;
}
.task.run {
  background: linear-gradient(#76b9ed, #76b9ed) center bottom / 40px 2px no-repeat;
}
.task.current {
  background: linear-gradient(#76b9ed, #76b9ed) center bottom / 48px 2px no-repeat, #4a4c4d;
}
.tray {
  margin-left: auto;
  display: flex;
  align-items: center;
  gap: 8px;
  color: #e6e6e6;
  font-family: "Open Sans", "Noto Sans", sans-serif;
  font-size: 12px;
}
.lang {
  margin-left: 3px;
}
.clock {
  width: 64px;
  text-align: center;
  line-height: 18px;
}
.note {
  margin-left: 3px;
}
.peek {
  width: 5px;
  height: 40px;
  margin-left: 11px;
  border-left: 1px solid #555;
}
```

FILE: script.js
```
// [номенклатура, ед., кол-во план, кол-во факт, вес план, вес факт, выработка, годен до]
const goods = [
  ['Молоко "Любимая чашка" 2,5% т/бр1л с крыш', 'шт', '5 520,000', '5 520,000', '5 674,560', '5 674,560', '28.10.2023 0:00:00', '28.04.2024 0:00:00'],
  ['Молоко "Любимая чашка" 3,2% т/бр1л с крыш', 'шт', '5 640,000', '5 640,000', '5 797,920', '5 797,920', '30.10.2023 0:00:00', '30.04.2024 0:00:00'],
  ['Молоко "Российское" 2.5% Товарный знак "Янта", п/пак 1.0 л', 'шт', '255,000', '255,000', '262,140', '262,140', '01.11.2023 0:00:00', '06.11.2023 0:00:00'],
  ['Молоко "Российское" 3.2% Товарный знак "Янта", п/пак 1.0 л', 'шт', '270,000', '270,000', '277,560', '277,560', '01.11.2023 0:00:00', '06.11.2023 0:00:00'],
  ['Молоко "Российское" 3.5% Товарный знак "Янта", п/пак 1.0 л', 'шт', '60,000', '60,000', '61,680', '61,680', '01.11.2023 0:00:00', '06.11.2023 0:00:00'],
  ['Молоко "Российское" 3.2% Товарный знак "Янта", п/пак 0.5 л', 'шт', '60,000', '60,000', '30,840', '30,840', '01.11.2023 0:00:00', '06.11.2023 0:00:00'],
  ['Молоко "Неделька" 2.5% ТМ "Любимая чашка", п/пак 0.9', 'шт', '240,000', '240,000', '222,000', '222,048', '01.11.2023 0:00:00', '08.11.2023 0:00:00'],
  ['Молоко "Неделька" 3.2% ТМ "Любимая чашка", п/пак 0.9', 'шт', '300,000', '300,000', '277,500', '277,560', '01.11.2023 0:00:00', '08.11.2023 0:00:00'],
  ['Молоко "Российское" 2,5% п/пак 0,5 л', 'шт брик', '40,000', '40,000', '20,560', '20,560', '01.11.2023 0:00:00', '06.11.2023 0:00:00'],
  ['Молоко отборное от 3,4% до 6%, бутылка ПЭТ 0.93 л', 'шт', '24,000', '24,000', '22,944', '22,944', '01.11.2023 0:00:00', '08.11.2023 0:00:00'],
  ['Молоко 2,5%, бутылка ПЭТ 0,93 л', '', '324,000', '', '309,744', '', '', '']
];

const table = document.getElementById('goods');
goods.forEach((g, i) => {
  const body = document.createElement('tbody');
  if (i === 0) body.className = 'selected';
  body.innerHTML = `
    <tr><td class="n" rowspan="2">${i + 1}</td><td>${g[0]}</td><td class="num">${g[2]}</td><td class="num">${g[4]}</td><td></td><td></td></tr>
    <tr><td>${g[1]}</td><td class="num">${g[3]}</td><td class="num">${g[5]}</td><td>${g[6]}</td><td>${g[7]}</td></tr>`;
  table.appendChild(body);
});

// При открытии курсор стоит в поле организации
const org = document.getElementById('org');
org.focus();
org.select();
```
